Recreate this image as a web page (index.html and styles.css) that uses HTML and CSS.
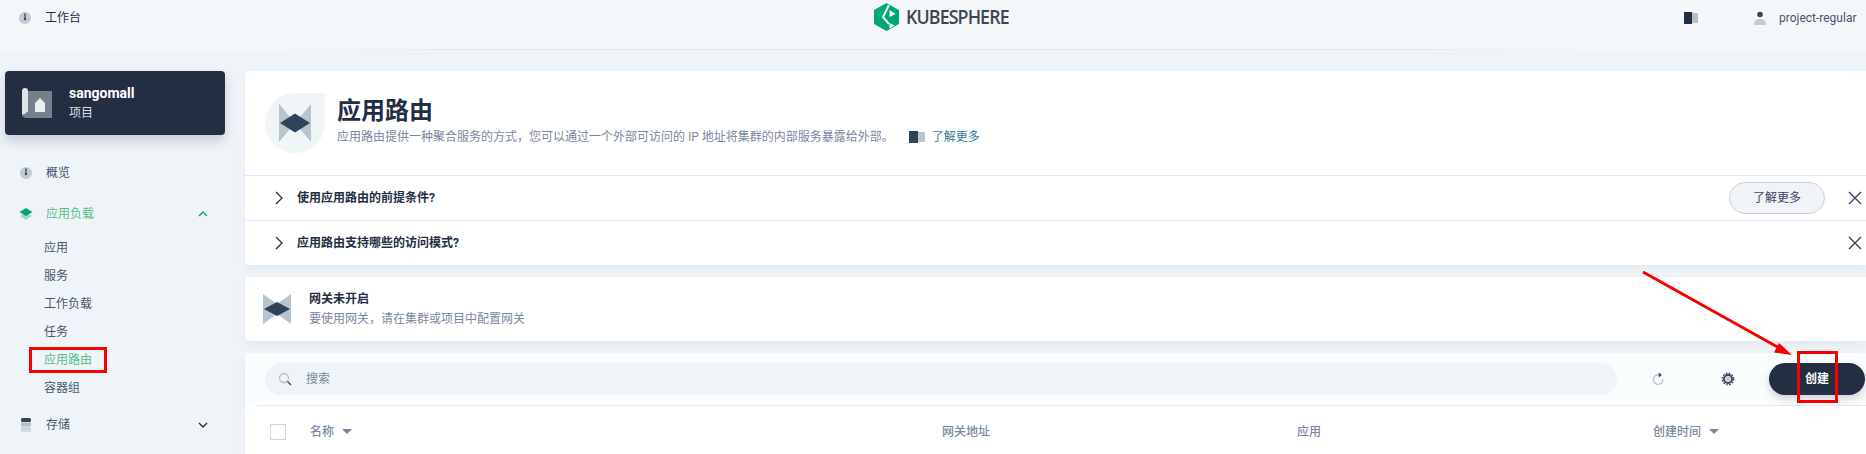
FILE: index.html
```html
<!DOCTYPE html>
<html lang="zh-CN">
<head>
    <meta charset="UTF-8">
    <meta name="viewport" content="width=device-width, initial-scale=1.0">
    <title>应用路由 - KubeSphere</title>
    <link rel="stylesheet" href="styles.css">
</head>
<body>
    <header class="topbar">
        <div class="topbar-left">
            <svg class="icon16" viewBox="0 0 16 16"><circle cx="8" cy="8" r="6" fill="#c2cad3"/><path d="M7.200 3.500h1.600l-.3 5h-1z" fill="#36435c"/><circle cx="8" cy="9" r="1.200" fill="#36435c"/></svg>
            <span>工作台</span>
        </div>
        <div class="logo">
            <svg width="25" height="28" viewBox="0 0 25 28"><path d="M12.500 0L25 7v14l-12.500 7L0 21V7z" fill="#00a971"/><path d="M15 2l-6 12 6 7" fill="none" stroke="#f3f7fa" stroke-width="2"/><path d="M15.500 7l6 4-6 3zM15.500 20l5 2.500-5 3z" fill="#f3f7fa"/></svg>
            <span>KUBESPHERE</span>
        </div>
        <div class="topbar-right">
            <svg class="icon-book" viewBox="0 0 14 12"><rect width="8" height="12" fill="#242e42"/><rect x="8" y="1" width="6" height="10" fill="#b6bfca"/></svg>
            <svg class="icon16 user-icon" viewBox="0 0 16 16"><circle cx="8" cy="4.500" r="2.800" fill="#36435c"/><path d="M2 15c0-4 2.500-6 6-6s6 2 6 6z" fill="#c2cad3"/></svg>
            <span>project-regular</span>
        </div>
    </header>

    <div class="layout">
        <aside class="sidebar">
            <div class="project-card">
                <svg width="30" height="30" viewBox="0 0 30 30"><path d="M6 3h24v27H4a4 4 0 0 1-4-4V4z" fill="#767f8c"/><path d="M0 3a3 3 0 0 1 6 0v21a3 3 0 0 0-3 2 3 3 0 0 0-3 1z" fill="#dfe4ea"/><path d="M13 15l5-5 5 5v9H13z" fill="#eef1f4"/></svg>
                <div>
                    <div class="project-name">sangomall</div>
                    <div class="project-type">项目</div>
                </div>
            </div>
            <nav class="nav">
                <div class="nav-item">
                    <svg class="icon16" viewBox="0 0 16 16"><circle cx="8" cy="8" r="6" fill="#c2cad3"/><path d="M7.200 3.500h1.600l-.3 5h-1z" fill="#36435c"/><circle cx="8" cy="9" r="1.200" fill="#36435c"/></svg>
                    <span>概览</span>
                </div>
                <div class="nav-item is-open">
                    <svg class="icon16" viewBox="0 0 16 16"><path d="M2 10l6-3.500 6 3.500-6 4z" fill="#9bdcbc"/><path d="M1.500 6L8 2l6.500 4L8 10z" fill="#00a971"/></svg>
                    <span>应用负载</span>
                    <svg class="caret" viewBox="0 0 12 8"><path d="M2 6l4-4 4 4" fill="none" stroke="#00a971" stroke-width="1.300"/></svg>
                </div>
                <div class="sub-nav">
                    <a>应用</a>
                    <a>服务</a>
                    <a>工作负载</a>
                    <a>任务</a>
                    <a class="is-active">应用路由</a>
                    <a>容器组</a>
                </div>
                <div class="nav-item nav-storage">
                    <svg class="icon16" viewBox="0 0 16 16"><rect x="3" y="1" width="10" height="4" rx="1.500" fill="#36435c"/><rect x="3" y="5.500" width="10" height="4" fill="#b6bfca"/><rect x="3" y="10" width="10" height="5" rx="1.500" fill="#d0d6dd"/></svg>
                    <span>存储</span>
                    <svg class="caret" viewBox="0 0 12 8"><path d="M2 2l4 4 4-4" fill="none" stroke="#242e42" stroke-width="1.300"/></svg>
                </div>
            </nav>
        </aside>

        <main class="content">
            <section class="card banner">
                <div class="banner-head">
                    <div class="banner-icon">
                        <svg width="32" height="38" viewBox="0 0 32 38"><path d="M0 0l16 19L32 0v38L16 19 0 38z" fill="#b8c4ce"/><path d="M1 19l15-9.500L31 19l-15 9.500z" fill="#2e4358"/></svg>
                    </div>
                    <div class="banner-text">
                        <h1>应用路由</h1>
                        <p>应用路由提供一种聚合服务的方式，您可以通过一个外部可访问的 IP 地址将集群的内部服务暴露给外部。
                            <svg class="doc-book" viewBox="0 0 16 12"><rect width="9" height="12" fill="#2e4358"/><rect x="9" y="1" width="7" height="10" fill="#b8c4ce"/></svg>
                            <a class="doc-link">了解更多</a>
                        </p>
                    </div>
                </div>
                <div class="tip-row">
                    <svg class="chevron" viewBox="0 0 10 14"><path d="M2 1l6 6-6 6" fill="none" stroke="#242e42" stroke-width="1.300"/></svg>
                    <span class="tip-title">使用应用路由的前提条件?</span>
                    <button class="btn-more">了解更多</button>
                    <svg class="close" viewBox="0 0 14 14"><path d="M1 1l12 12M13 1L1 13" stroke="#36435c" stroke-width="1.400"/></svg>
                </div>
                <div class="tip-row">
                    <svg class="chevron" viewBox="0 0 10 14"><path d="M2 1l6 6-6 6" fill="none" stroke="#242e42" stroke-width="1.300"/></svg>
                    <span class="tip-title">应用路由支持哪些的访问模式?</span>
                    <svg class="close" viewBox="0 0 14 14"><path d="M1 1l12 12M13 1L1 13" stroke="#36435c" stroke-width="1.400"/></svg>
                </div>
            </section>

            <section class="card gateway">
                <svg width="28" height="30" viewBox="0 0 28 30"><path d="M0 0l14 10L28 0v30L14 20 0 30z" fill="#b8c4ce"/><path d="M1 15l13-7 13 7-13 7z" fill="#2e4358"/></svg>
                <div>
                    <div class="gateway-title">网关未开启</div>
                    <div class="gateway-desc">要使用网关，请在集群或项目中配置网关</div>
                </div>
            </section>

            <section class="card list">
                <div class="toolbar">
                    <div class="search">
                        <svg class="icon16" viewBox="0 0 16 16"><circle cx="7" cy="7" r="4.500" fill="none" stroke="#b6bfca" stroke-width="1.300"/><path d="M10.500 10.500l3.500 3.500" stroke="#36435c" stroke-width="1.300"/></svg>
                        <span>搜索</span>
                    </div>
                    <svg class="icon16 refresh" viewBox="0 0 16 16"><path d="M9.500 4A4.800 4.800 0 1 0 12.800 8" fill="none" stroke="#b6bfca" stroke-width="1.300"/><path d="M8.800 1.500l3 2.500-3 2.500z" fill="#36435c"/></svg>
                    <svg class="gear" viewBox="0 0 14 14"><circle cx="7" cy="7" r="4" fill="none" stroke="#36435c" stroke-width="2"/><circle cx="7" cy="7" r="5.800" fill="none" stroke="#36435c" stroke-width="1.300" stroke-dasharray="1.700 1.340"/><circle cx="7" cy="7" r="2.400" fill="#c2cad3"/></svg>
                    <button class="btn-create">创建</button>
                </div>
                <div class="table-head">
                    <div><span class="checkbox"></span></div>
                    <div class="sortable">名称<i class="sort"></i></div>
                    <div>网关地址</div>
                    <div>应用</div>
                    <div class="sortable">创建时间<i class="sort"></i></div>
                </div>
            </section>
        </main>
    </div>

    <div class="mark mark-nav"></div>
    <div class="mark mark-create"></div>
    <svg class="mark-arrow" width="1866" height="454" viewBox="0 0 1866 454">
        <path d="M1643 272L1782 349.500" stroke="#f60000" stroke-width="3"/>
        <path d="M1792 355l-18-2.500 5-9.500z" fill="#f60000"/>
    </svg>
</body>
</html>
```

FILE: styles.css
```css
* { box-sizing: border-box; }
html, body { height: 100%; }
body {
    margin: 0;
    overflow: hidden;
    position: relative;
    background: #eff4f9;
    color: #242e42;
    font-family: Roboto, "Noto Sans CJK SC", sans-serif;
    font-size: 12px;
    line-height: 20px;
}
svg { display: block; flex: none; }
.icon16 { width: 16px; height: 16px; }
.icon-book { width: 14px; height: 12px; }

.topbar {
    height: 50px;
    display: flex;
    align-items: flex-start;
    justify-content: space-between;
    padding: 8px 9px 0 17px;
    background: #f3f7fa linear-gradient(90deg, transparent 15%, #e3e8ee 25%, #e3e8ee 75%, transparent 85%) no-repeat 0 100% / 100% 1px;
    position: relative;
}
.topbar-left { display: flex; align-items: center; gap: 12px; width: 300px; height: 20px; }
.topbar-right { display: flex; align-items: center; height: 20px; width: 173px; color: #4a5568; }
.topbar-right .icon-book { margin-right: 54px; }
.user-icon { margin-right: 11px; }
.logo {
    display: flex;
    align-items: center;
    gap: 7px;
    position: absolute;
    left: 874px;
    top: 3px;
}
.logo span {
    font-family: "Open Sans", sans-serif;
    font-size: 20px;
    font-weight: 600;
    line-height: 28px;
    color: #3e464f;
    letter-spacing: -1px;
    transform: scaleX(.89);
    transform-origin: 0 50%;
}

.layout { display: flex; padding-top: 21px; }
.sidebar { width: 245px; flex: none; padding: 0 20px 0 5px; }
.project-card {
    height: 64px;
    display: flex;
    align-items: center;
    gap: 17px;
    padding-left: 17px;
    border-radius: 4px;
    background: #242e42;
    color: #fff;
    box-shadow: 0 6px 12px rgba(36, 46, 66, .2);
}
.project-name { font-size: 14px; font-weight: 700; }
.project-type { color: #d8dee5; }

.nav { margin-top: 20px; color: #485467; }
.nav-item {
    height: 36px;
    display: flex;
    align-items: center;
    gap: 12px;
    padding-left: 13px;
    margin-bottom: 5px;
}
.nav-item.is-open { color: #55bc8a; margin-bottom: 2px; }
.nav-storage { margin-top: 5px; }
.caret { width: 12px; height: 8px; margin-left: auto; margin-right: 16px; }
.sub-nav a { display: block; height: 28px; line-height: 28px; padding-left: 39px; }
.sub-nav .is-active { color: #55bc8a; }

.content { flex: 1; min-width: 0; }
.card { background: #fff; border-radius: 4px 0 0 4px; box-shadow: 0 4px 8px rgba(36, 46, 66, .05); }
.banner-head {
    height: 104px;
    display: flex;
    gap: 12px;
    padding: 22px 0 0 20px;
}
.banner-icon {
    width: 60px;
    height: 60px;
    display: flex;
    align-items: center;
    justify-content: center;
    background: #f0f5f8;
    border-radius: 50% 0 50% 50%;
}
.banner-text { padding-top: 2px; }
h1 { margin: 0; font-size: 24px; line-height: 32px; font-weight: 700; }
.banner-text p { margin: 0; display: flex; align-items: center; color: #79879c; }
.doc-book { width: 16px; height: 12px; margin-left: 15px; margin-right: 7px; }
.doc-link { color: #36789a; }

.tip-row {
    height: 45px;
    display: flex;
    align-items: center;
    padding: 0 4px 0 29px;
    border-top: 1px solid #e3e9ef;
}
.tip-row .chevron { width: 10px; height: 14px; margin-right: 13px; }
.tip-title { font-weight: 700; }
.btn-more {
    width: 96px;
    height: 32px;
    margin-left: auto;
    border: 1px solid #ccd3db;
    border-radius: 16px;
    background: #f0f4f8;
    color: #36435c;
    font: inherit;
}
.close { width: 14px; height: 14px; margin-left: auto; }
.btn-more + .close { margin-left: 23px; }

.gateway {
    height: 64px;
    margin-top: 12px;
    display: flex;
    align-items: center;
    gap: 18px;
    padding-left: 18px;
}
.gateway-title { font-weight: 700; }
.gateway-desc { color: #79879c; }

.list { margin-top: 12px; }
.toolbar {
    display: flex;
    align-items: center;
    padding: 10px 1px 10px 20px;
    background: #fafdfe;
}
.search {
    flex: 1;
    height: 32px;
    display: flex;
    align-items: center;
    gap: 13px;
    padding-left: 12px;
    border-radius: 16px;
    background: #eff4f9;
    color: #79879c;
}
.refresh { margin-left: 33px; }
.gear { width: 14px; height: 14px; margin-left: 55px; margin-right: 1px; }
.btn-create {
    width: 96px;
    height: 32px;
    margin-left: 33px;
    border: 0;
    border-radius: 16px;
    background: #242e42;
    color: #fff;
    font: inherit;
    font-weight: 700;
    box-shadow: 0 4px 8px rgba(36, 46, 66, .2);
}
.table-head {
    height: 60px;
    margin-left: 12px;
    padding: 0 0 8px 13px;
    display: grid;
    grid-template-columns: 40px 632px 355px 356px 1fr;
    align-items: center;
    border-top: 1px solid #e3e9ef;
    color: #79879c;
    font-weight: 500;
}
.checkbox { display: block; width: 16px; height: 16px; border: 1px solid #ccd3db; background: #fff; }
.sortable { display: flex; align-items: center; }
.sort {
    width: 0;
    height: 0;
    margin-left: 8px;
    border: 5px solid transparent;
    border-top: 5px solid #79879c;
    border-bottom: 0;
}

/* red annotations drawn over the screenshot */
.mark { position: absolute; border: 3px solid #f60000; }
.mark-nav { left: 29px; top: 347px; width: 78px; height: 26px; }
.mark-create { left: 1797px; top: 351px; width: 41px; height: 52px; }
.mark-arrow { position: absolute; left: 0; top: 0; pointer-events: none; }
```
